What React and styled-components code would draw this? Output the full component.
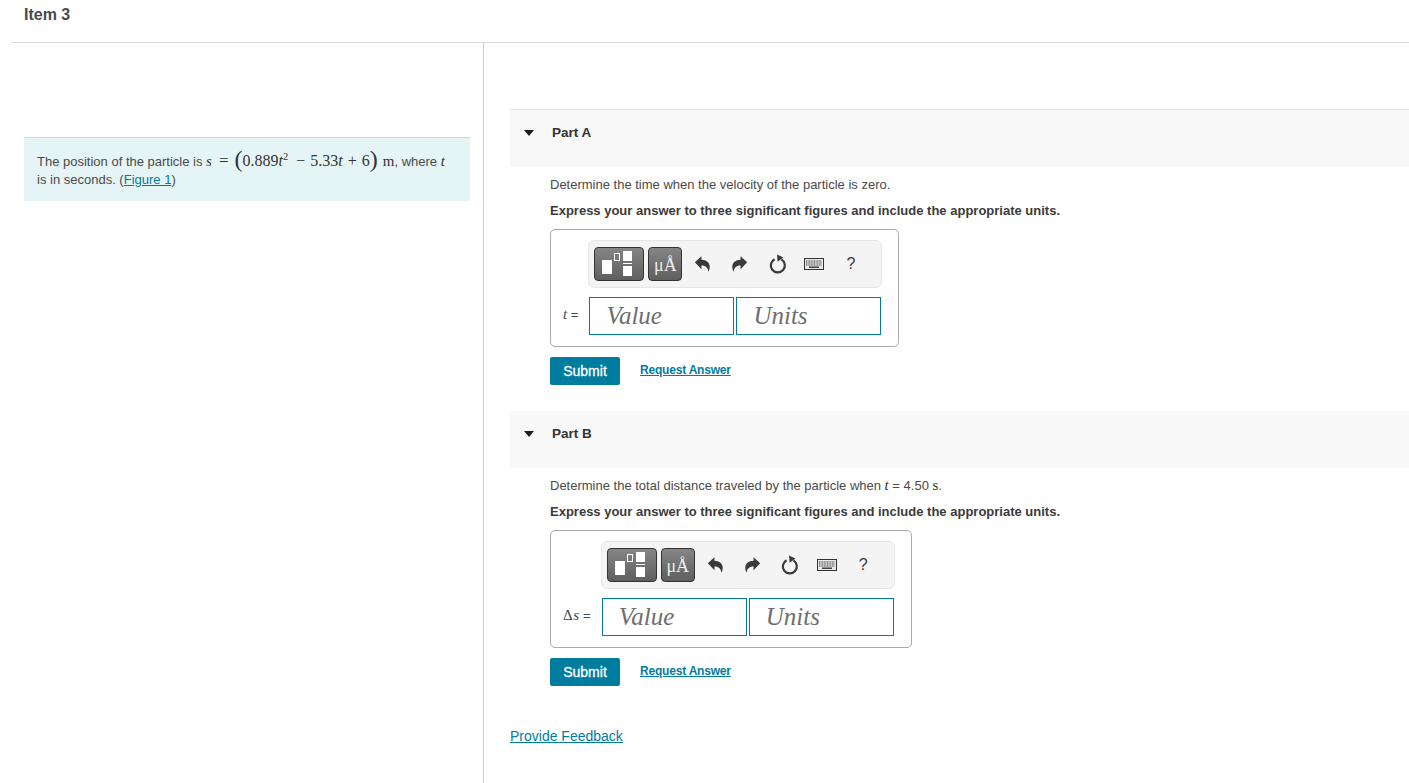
import React from 'react'
import styled, { createGlobalStyle } from 'styled-components'

const GlobalStyle = createGlobalStyle`
  html, body {
    margin: 0;
    padding: 0;
    background: #fff;
    overflow: hidden;
  }
  body {
    font-family: "Liberation Sans", Arial, sans-serif;
    color: #3b3b3b;
  }
`;

const teal = '#007c9e';

function UndoIcon({ flip }) {
  return (
    <svg width="17" height="18" viewBox="0 0 16 16" style={flip ? { transform: 'scaleX(-1)' } : undefined}>
      <path fill="#3a3a3a" d="M.8 6.4 7 .8v3.3c4.8 0 7.8 2.8 7.8 6.6 0 1.8-.5 3.5-1.3 4.6-.3-3.4-2.2-5.8-6.5-5.8v3.4z" />
    </svg>
  );
}

function ResetIcon() {
  return (
    <svg width="18" height="20" viewBox="0 0 18 20">
      <path fill="none" stroke="#3a3a3a" strokeWidth="2.2" d="M5.6 5.2a7 7 0 1 0 6.8.2" />
      <path fill="#3a3a3a" d="M8 .6 14.4 3.6 8.6 7.8z" />
    </svg>
  );
}

function KeyboardIcon() {
  return (
    <svg width="20" height="12" viewBox="0 0 20 12">
      <rect x=".5" y=".5" width="19" height="11" fill="#e8e8e8" stroke="#333" />
      <path stroke="#333" strokeWidth="1.2" strokeDasharray="1 .6" d="M2 3h16M2 5h16M2 7h16" />
      <path stroke="#333" strokeWidth="1.4" d="M5 9.2h10" />
    </svg>
  );
}

function Toolbar() {
  return (
    <ToolbarWrap>
      <DarkButton wide>
        <svg width="48" height="32" viewBox="0 0 48 32">
          <rect x="7" y="12" width="10" height="14" fill="#fff" />
          <rect x="19.5" y="5.5" width="5" height="7" fill="none" stroke="#fff" />
          <rect x="28" y="3" width="9" height="10" fill="#fff" />
          <rect x="28" y="15" width="9" height="1" fill="#fff" />
          <rect x="28" y="18" width="9" height="10" fill="#fff" />
        </svg>
      </DarkButton>
      <DarkButton>μÅ</DarkButton>
      <ToolIcon first><UndoIcon /></ToolIcon>
      <ToolIcon><UndoIcon flip /></ToolIcon>
      <ToolIcon shift={2}><ResetIcon /></ToolIcon>
      <ToolIcon shift={1}><KeyboardIcon /></ToolIcon>
      <ToolIcon help>?</ToolIcon>
    </ToolbarWrap>
  );
}

function AnswerPart({ title, question, label, bottom, first }) {
  return (
    <Part bottom={bottom}>
      <PartHeader first={first}>
        <Caret />
        <PartTitle>{title}</PartTitle>
      </PartHeader>
      <PartBody>
        <Question>{question}</Question>
        <Instruction>Express your answer to three significant figures and include the appropriate units.</Instruction>
        <AnswerBox>
          <Toolbar />
          <Label>{label}</Label>
          <Inputs>
            <FakeInput>Value</FakeInput>
            <FakeInput>Units</FakeInput>
          </Inputs>
        </AnswerBox>
        <Actions>
          <Submit>Submit</Submit>
          <RequestLink href="#">Request Answer</RequestLink>
        </Actions>
      </PartBody>
    </Part>
  );
}

export default function App() {
  return (
    <Page>
      <GlobalStyle />
      <Header>Item 3</Header>
      <Columns>
        <Left>
          <Intro>
            The position of the particle is <Eq><i>s</i><EqSign>=</EqSign></Eq>
            <Formula>
              <Paren>(</Paren>0.889<i>t</i><sup>2</sup><Minus>−</Minus>5.33<i>t</i><Plus>+</Plus>6<Paren>)</Paren>
            </Formula>
            <Unit>m</Unit>, where <Eq><i>t</i></Eq><br />
            is in seconds. (<FigureLink href="#">Figure 1</FigureLink>)
          </Intro>
        </Left>
        <Right>
          <AnswerPart
            first
            title="Part A"
            label={<><i>t</i> =</>}
            question="Determine the time when the velocity of the particle is zero."
            bottom={26}
          />
          <AnswerPart
            title="Part B"
            label={<><Delta>Δ<i>s</i></Delta> =</>}
            question={<>Determine the total distance traveled by the particle when <Eq><i>t</i></Eq> = 4.50 <Eq>s</Eq>.</>}
            bottom={41}
          />
          <Feedback href="#">Provide Feedback</Feedback>
        </Right>
      </Columns>
    </Page>
  )
}

const Page = styled.div`
  height: 783px;
  display: flex;
  flex-direction: column;
  overflow: hidden;
`;

const Header = styled.div`
  margin-left: 11px;
  height: 42px;
  padding-left: 13px;
  border-bottom: 1px solid #dcdcdc;
  font-size: 16px;
  font-weight: 700;
  line-height: 29px;
  color: #4a4a4a;
`;

const Columns = styled.div`
  flex: 1;
  display: flex;
`;

const Left = styled.div`
  width: 473px;
  margin-left: 11px;
  padding: 94px 13px 0;
  box-sizing: border-box;
  border-right: 1px solid #c8ced6;
  flex-shrink: 0;
`;

const Intro = styled.div`
  height: 64px;
  width: 446px;
  box-sizing: border-box;
  border-top: 1px solid #d3dde0;
  background: #e5f5f6;
  padding: 14px 13px 0;
  font-size: 13px;
  line-height: 18px;
  color: #4a4a4a;
  white-space: nowrap;
`;

const Eq = styled.span`
  font-family: "Liberation Serif", "Times New Roman", serif;
  font-size: 15px;
  line-height: 0;
  color: #333;
`;

const EqSign = styled.span`
  margin: 0 5px 0 7px;
  font-size: 17px;
`;

const Formula = styled.span`
  font-family: "Liberation Serif", "Times New Roman", serif;
  font-size: 16px;
  margin-left: 1px;
  color: #333;
  sup {
    font-size: 10.5px;
    line-height: 0;
    vertical-align: 6px;
  }
`;

const Paren = styled.span`
  font-size: 24px;
  line-height: 0;
  vertical-align: -1px;
`;

const Minus = styled.span`
  margin: 0 5px 0 8px;
`;

const Plus = styled.span`
  margin: 0 5px;
`;

const Unit = styled.span`
  font-family: "Liberation Serif", "Times New Roman", serif;
  font-size: 15px;
  color: #333;
  margin-left: 5px;
`;

const FigureLink = styled.a`
  color: ${teal};
  text-decoration: underline;
`;

const Right = styled.div`
  flex: 1;
  padding: 66px 0 0 26px;
  min-width: 0;
`;

const Part = styled.section`
  margin-bottom: ${props => props.bottom}px;
`;

const PartHeader = styled.div`
  height: ${props => (props.first ? 58 : 57)}px;
  background: #f8f8f8;
  box-shadow: ${props => (props.first ? 'inset 0 1px 0 #e2e2e2' : 'none')};
  display: flex;
  align-items: flex-start;
  padding: ${props => (props.first ? 16 : 15)}px 0 0 14px;
  box-sizing: border-box;
`;

const Caret = styled.span`
  width: 0;
  height: 0;
  margin-top: 5px;
  border-left: 5.5px solid transparent;
  border-right: 5.5px solid transparent;
  border-top: 6px solid #1c1c1c;
`;

const PartTitle = styled.div`
  margin-left: 18px;
  font-size: 13.5px;
  font-weight: 700;
  line-height: 15px;
  color: #333;
`;

const PartBody = styled.div`
  padding: 11px 0 0 40px;
`;

const Question = styled.div`
  height: 14px;
  font-size: 13px;
  line-height: 14px;
  color: #4a4a4a;
`;

const Instruction = styled.div`
  margin-top: 11px;
  font-size: 13px;
  font-weight: 700;
  line-height: 15px;
  color: #3b3b3b;
`;

const AnswerBox = styled.div`
  margin-top: 11px;
  display: inline-grid;
  grid-template-columns: auto auto;
  grid-template-rows: auto auto;
  align-items: center;
  padding: 10px 17px 11px 12px;
  border: 1px solid #aaa;
  border-radius: 5px;
  vertical-align: top;
`;

const ToolbarWrap = styled.div`
  grid-column: 2;
  grid-row: 1;
  height: 48px;
  margin: 0 -1px 9px -1px;
  box-sizing: border-box;
  padding: 6px 5px;
  display: flex;
  align-items: center;
  background: #f4f4f4;
  border: 1px solid #e6e6e6;
  border-radius: 6px;
`;

const DarkButton = styled.div`
  width: ${props => (props.wide ? 50 : 34)}px;
  height: 34px;
  margin-right: ${props => (props.wide ? 4 : 0)}px;
  padding-top: ${props => (props.wide ? 0 : 3)}px;
  box-sizing: border-box;
  flex-shrink: 0;
  display: flex;
  align-items: center;
  justify-content: center;
  border: 1px solid #333;
  border-radius: 4px;
  background: linear-gradient(#858585, #5f5f5f);
  color: #eee;
  font-family: "Liberation Serif", "Times New Roman", serif;
  font-size: 18px;
`;

const ToolIcon = styled.div`
  width: 37px;
  height: 34px;
  margin-left: ${props => (props.first ? 2 : 0)}px;
  padding-left: ${props => props.shift || 0}px;
  box-sizing: border-box;
  flex-shrink: 0;
  display: flex;
  align-items: center;
  justify-content: center;
  color: #3a3a3a;
  font-size: ${props => (props.help ? 16 : 14)}px;
`;

const Label = styled.div`
  grid-column: 1;
  grid-row: 2;
  margin-bottom: 3px;
  font-size: 13px;
  color: #444;
  padding-right: 11px;
  i {
    font-family: "Liberation Serif", "Times New Roman", serif;
    font-size: 15px;
  }
`;

const Delta = styled.span`
  font-family: "Liberation Serif", "Times New Roman", serif;
  font-size: 15px;
  letter-spacing: 0.5px;
`;

const Inputs = styled.div`
  grid-column: 2;
  grid-row: 2;
  display: flex;
  gap: 2px;
`;

const FakeInput = styled.div`
  width: 145px;
  height: 38px;
  box-sizing: border-box;
  border: 1px solid ${teal};
  padding-left: 16px;
  font-family: "Liberation Serif", "Times New Roman", serif;
  font-style: italic;
  font-size: 25px;
  line-height: 36px;
  color: #6e6e6e;
`;

const Actions = styled.div`
  display: flex;
  align-items: center;
  margin-top: 10px;
  height: 28px;
`;

const Submit = styled.div`
  width: 70px;
  height: 28px;
  display: flex;
  align-items: center;
  justify-content: center;
  background: ${teal};
  border-radius: 2px;
  color: #fff;
  font-size: 14px;
  -webkit-text-stroke: 0.3px #fff;
`;

const RequestLink = styled.a`
  margin-left: 20px;
  margin-top: -2px;
  font-size: 12px;
  font-weight: 700;
  letter-spacing: -0.2px;
  color: ${teal};
  text-decoration: underline;
`;

const Feedback = styled.a`
  font-size: 14px;
  color: ${teal};
  text-decoration: underline;
`;
